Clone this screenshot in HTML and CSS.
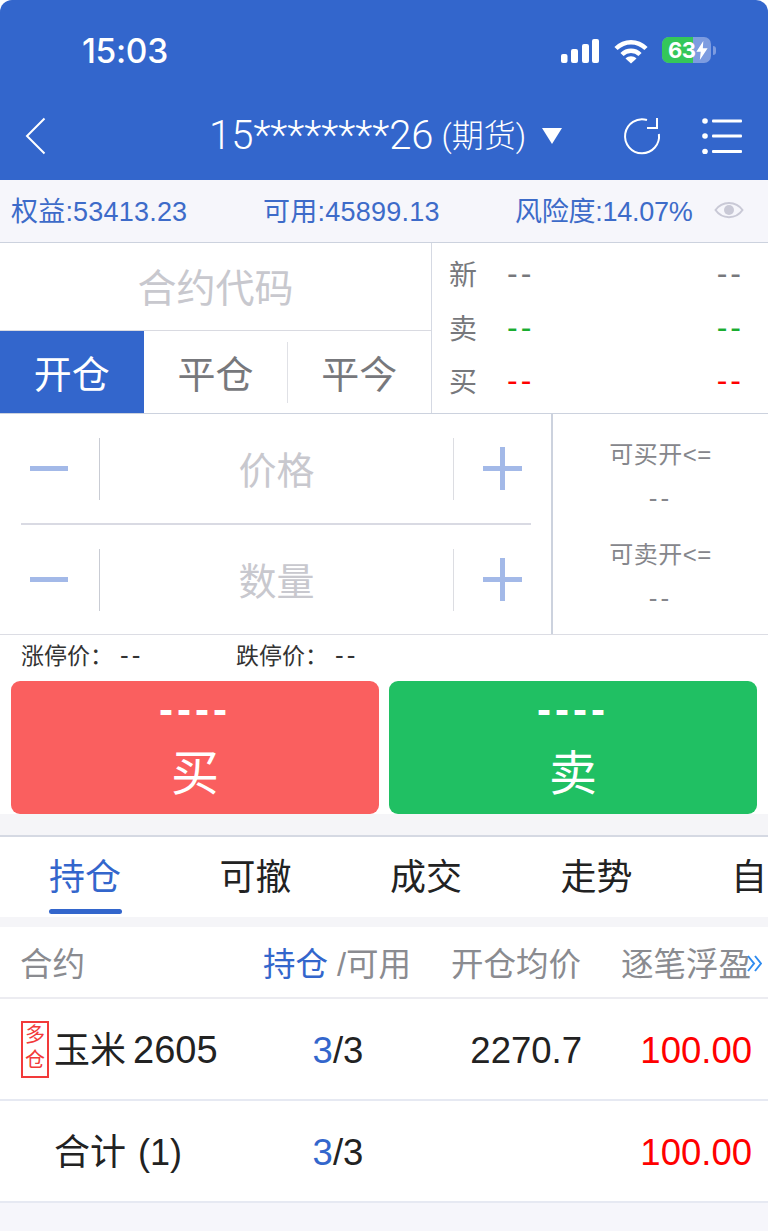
FILE: index.html
```html
<!DOCTYPE html>
<html lang="zh-CN">
<head>
  <meta charset="UTF-8" />
  <title>交易</title>
  <link rel="stylesheet" href="styles.css">
</head>
<body>

  <!-- Blue header: status bar + nav -->
  <header class="app-header">
    <div class="status-bar">
      <span class="clock">15:03</span>
      <div class="status-icons">
        <svg class="signal" width="38" height="24" viewBox="0 0 38 24" fill="#fff">
          <rect x="0" y="15" width="6.500" height="9" rx="2"/>
          <rect x="10" y="10" width="7" height="14" rx="2"/>
          <rect x="21" y="5" width="7" height="19" rx="2"/>
          <rect x="31" y="0" width="7" height="24" rx="2"/>
        </svg>
        <svg class="wifi" width="34" height="25" viewBox="0 0 34 25" fill="none" stroke="#fff" stroke-width="4.500">
          <path d="M2 9.500C10.500 1 23.500 1 32 9.500"/>
          <path d="M8 15.500C13 10.500 21 10.500 26 15.500"/>
          <path d="M17 24.500L11.500 19.500C14.500 16.500 19.500 16.500 22.500 19.500Z" fill="#fff" stroke="none"/>
        </svg>
        <div class="battery">
          <div class="battery-fill"></div>
          <span class="battery-num">63</span>
          <svg class="battery-bolt" width="12" height="19" viewBox="0 0 13 22" fill="#fff">
            <path d="M8 0L0 12.500H5L4 22L13 8.500H7.500Z"/>
          </svg>
        </div>
        <span class="battery-nub"></span>
      </div>
    </div>
    <nav class="nav-bar">
      <svg class="nav-back" width="22" height="38" viewBox="0 0 22 38" fill="none" stroke="#fff" stroke-width="2">
        <path d="M19.500 1.500L2 19L19.500 36.500"/>
      </svg>
      <div class="nav-title">
        <span>15********26</span>
        <span class="nav-title-sub">(期货)</span>
        <svg width="20" height="16" viewBox="0 0 20 16" fill="#fff"><path d="M0 0H20L10 16Z"/></svg>
      </div>
      <svg class="nav-refresh" width="40" height="42" viewBox="0 0 40 42" fill="none" stroke="#fff" stroke-width="2">
        <path d="M26 5A17 17 0 1 0 37.900 19"/>
        <path d="M26 13H36V3"/>
      </svg>
      <svg class="nav-menu" width="42" height="36" viewBox="0 0 42 36" fill="#fff">
        <circle cx="3" cy="3" r="2.800"/>
        <circle cx="3" cy="18" r="2.800"/>
        <circle cx="3" cy="33.500" r="2.800"/>
        <rect x="10" y="1.500" width="30" height="3" rx="1"/>
        <rect x="10" y="16.500" width="30" height="3" rx="1"/>
        <rect x="10" y="32" width="30" height="3" rx="1"/>
      </svg>
    </nav>
  </header>

  <!-- Account summary -->
  <div class="account-bar">
    <span class="account-equity">权益:53413.23</span>
    <span class="account-free">可用:45899.13</span>
    <span class="account-risk">风险度:14.07%</span>
    <svg class="eye" width="30" height="20" viewBox="0 0 30 20">
      <path d="M1.500 10C8 0.500 22 0.500 28.500 10C22 19.500 8 19.500 1.500 10Z" fill="none" stroke="#c9c9d6" stroke-width="2"/>
      <circle cx="15" cy="10" r="5" fill="#c9c9d6"/>
    </svg>
  </div>

  <!-- Contract + quote -->
  <section class="order-top">
    <div class="order-left">
      <div class="contract-code">合约代码</div>
      <div class="offset-tabs">
        <div class="offset-tab active">开仓</div>
        <div class="offset-tab">平仓</div>
        <div class="offset-tab split">平今</div>
      </div>
    </div>
    <div class="quote">
      <div class="quote-row"><span class="quote-label">新</span><span class="dash">--</span><span class="dash">--</span></div>
      <div class="quote-row green"><span class="quote-label">卖</span><span class="dash">--</span><span class="dash">--</span></div>
      <div class="quote-row red"><span class="quote-label">买</span><span class="dash">--</span><span class="dash">--</span></div>
    </div>
  </section>

  <!-- Price + volume -->
  <section class="order-mid">
    <div class="steppers">
      <div class="stepper">
        <div class="step-btn"><span class="minus"></span></div>
        <div class="step-value">价格</div>
        <div class="step-btn"><span class="plus"></span></div>
      </div>
      <div class="stepper-line"></div>
      <div class="stepper">
        <div class="step-btn"><span class="minus"></span></div>
        <div class="step-value">数量</div>
        <div class="step-btn"><span class="plus"></span></div>
      </div>
    </div>
    <div class="limits">
      <div class="limit-group">
        <div>可买开&lt;=</div>
        <div class="limits-dash">--</div>
      </div>
      <div class="limit-group">
        <div>可卖开&lt;=</div>
        <div class="limits-dash">--</div>
      </div>
    </div>
  </section>

  <div class="price-limits">
    <span class="price-limit">涨停价：<span class="price-dash">--</span></span>
    <span class="price-limit">跌停价：<span class="price-dash">--</span></span>
  </div>

  <div class="trade-buttons">
    <div class="trade-btn buy"><span class="trade-price">----</span><span class="trade-name">买</span></div>
    <div class="trade-btn sell"><span class="trade-price">----</span><span class="trade-name">卖</span></div>
  </div>

  <!-- Lower tabs -->
  <div class="list-tabs">
    <span class="list-tab active">持仓</span>
    <span class="list-tab">可撤</span>
    <span class="list-tab">成交</span>
    <span class="list-tab">走势</span>
    <span class="list-tab last">自</span>
  </div>

  <!-- Positions table -->
  <div class="pos-table">
    <div class="pos-head">
      <span>合约</span>
      <span class="center"><span class="blue">持仓</span> /可用</span>
      <span class="right">开仓均价</span>
      <span class="right">逐笔浮盈</span>
      <svg class="more" width="15" height="17" viewBox="0 0 15 17" fill="none" stroke="#2f8cf0" stroke-width="2">
        <path d="M1 1L7 8.500L1 16"/>
        <path d="M8 1L14 8.500L8 16"/>
      </svg>
    </div>
    <div class="pos-row">
      <span class="pos-name"><span class="pos-tag">多<br>仓</span><span class="pos-text">玉米<span class="pos-code">2605</span></span></span>
      <span class="center"><span class="blue">3</span>/3</span>
      <span class="right">2270.7</span>
      <span class="right red-text">100.00</span>
    </div>
    <div class="pos-row">
      <span class="pos-name total"><span class="pos-text">合计 (1)</span></span>
      <span class="center"><span class="blue">3</span>/3</span>
      <span class="right"></span>
      <span class="right red-text">100.00</span>
    </div>
  </div>
  <div class="page-rest"></div>

</body>
</html>
```

FILE: styles.css
```css
* {
  box-sizing: border-box;
}

html, body {
  margin: 0;
  padding: 0;
}

body {
  width: 768px;
  min-height: 100vh;
  display: flex;
  flex-direction: column;
  overflow-x: hidden;
  background-color: #ffffff;
  color: #222222;
  font-family: "Liberation Sans", "Noto Sans CJK SC", sans-serif;
}

/* Header */
.app-header {
  height: 180px;
  background-color: #3366cc;
  color: white;
  border-radius: 12px 12px 0 0;
}

.status-bar {
  height: 100px;
  padding: 31px 0 0 82px;
  display: flex;
  align-items: flex-start;
  justify-content: space-between;
}

.clock {
  font-family: Inter, sans-serif;
  font-size: 33.500px;
  font-weight: 500;
  line-height: 41px;
  letter-spacing: -0.3px;
}

.status-icons {
  display: flex;
  align-items: flex-start;
  padding: 8px 52px 0 0;
}

.wifi {
  margin: 0 14px 0 15px;
}

.battery {
  position: relative;
  width: 49px;
  height: 26px;
  margin-top: -2px;
  border-radius: 7px;
  background-color: #7d9ce0;
  overflow: hidden;
}

.battery-fill {
  width: 31px;
  height: 100%;
  background-color: #34c759;
}

.battery-num {
  position: absolute;
  left: 6px;
  top: 0;
  font-family: Inter, sans-serif;
  font-size: 22px;
  font-weight: 700;
  line-height: 26px;
  letter-spacing: -0.5px;
}

.battery-bolt {
  position: absolute;
  right: 3px;
  top: 4px;
}

.battery-nub {
  width: 3px;
  height: 9px;
  margin: 7px 0 0 2px;
  border-radius: 0 3px 3px 0;
  background-color: #7d9ce0;
}

.nav-bar {
  height: 80px;
  display: flex;
  align-items: flex-start;
  padding: 17px 24px 0 25px;
}

.nav-title {
  flex: 1;
  margin-left: 162px;
  display: flex;
  align-items: center;
  gap: 8px;
  font-family: Roboto, "Noto Sans CJK SC", sans-serif;
  font-size: 40px;
  line-height: 38px;
  font-weight: 300;
  white-space: nowrap;
}

.nav-title-sub {
  font-size: 32px;
  margin-right: 8px;
}

.nav-refresh {
  margin-top: -2px;
}

.nav-menu {
  margin-left: 41px;
  margin-top: 1px;
}

/* Account bar */
.account-bar {
  height: 63px;
  padding: 0 24px 3px 11px;
  display: flex;
  align-items: center;
  background-color: #f6f6fb;
  border-bottom: 1px solid #ccd2de;
  color: #3d6bc9;
  font-size: 27px;
  white-space: nowrap;
}

.account-equity {
  width: 252px;
  letter-spacing: 0.2px;
}

.account-free {
  width: 252px;
  letter-spacing: 0.25px;
}

.account-risk {
  width: 199px;
  letter-spacing: -0.25px;
}

/* Contract and quote */
.order-top {
  height: 171px;
  display: flex;
  border-bottom: 1px solid #ccd2de;
}

.order-left {
  width: 432px;
  border-right: 1px solid #d5d9e3;
  display: flex;
  flex-direction: column;
}

.contract-code {
  height: 88px;
  padding-bottom: 4px;
  display: flex;
  align-items: center;
  justify-content: center;
  border-bottom: 1px solid #d9dae1;
  color: #c8c8ce;
  font-size: 39px;
}

.offset-tabs {
  flex: 1;
  display: flex;
}

.offset-tab {
  width: 144px;
  padding-bottom: 2px;
  display: flex;
  align-items: center;
  justify-content: center;
  color: #77787c;
  font-size: 38px;
}

.offset-tab.active {
  background-color: #3366cc;
  color: white;
}

.offset-tab.split {
  position: relative;
}

.offset-tab.split::before {
  content: "";
  position: absolute;
  left: 0;
  top: 11px;
  bottom: 10px;
  width: 1px;
  background-color: #e0e1e6;
}

.quote {
  flex: 1;
  display: flex;
  flex-direction: column;
  justify-content: center;
  padding: 0 24px 3px 17px;
  color: #77787c;
}

.quote-row {
  height: 53.500px;
  display: grid;
  grid-template-columns: 58px 1fr auto;
  align-items: center;
}

.quote-label {
  font-size: 28px;
  color: #77787c;
}

.dash {
  font-size: 32px;
  line-height: 38px;
  letter-spacing: 3px;
}

.green .dash {
  color: #1aad30;
}

.red .dash {
  color: #ff0000;
}

/* Price and volume */
.order-mid {
  height: 221px;
  display: flex;
  border-bottom: 1px solid #dcdde4;
}

.steppers {
  width: 553px;
  border-right: 2px solid #ccd2de;
  display: flex;
  flex-direction: column;
}

.stepper {
  flex: 1;
  display: grid;
  grid-template-columns: 100px 1fr 98px;
  align-items: center;
}

.stepper-line {
  height: 2px;
  margin: 0 20px 0 21px;
  background-color: #d9dae3;
}

.step-btn {
  height: 62px;
  display: flex;
  align-items: center;
  justify-content: center;
  border-right: 1px solid #c9ccd4;
}

.step-btn:last-child {
  border-right: none;
  border-left: 1px solid #dcdde2;
}

.minus {
  width: 38px;
  height: 5px;
  margin-right: 1px;
  background-color: #a3b9e8;
}

.plus {
  position: relative;
  width: 39px;
  height: 43px;
}

.plus::before, .plus::after {
  content: "";
  position: absolute;
  background-color: #a3b9e8;
}

.plus::before {
  left: 0;
  right: 0;
  top: 19px;
  height: 5px;
}

.plus::after {
  top: 0;
  bottom: 0;
  left: 17px;
  width: 5px;
}

.step-value {
  padding-bottom: 3px;
  text-align: center;
  color: #c8c8ce;
  font-size: 38px;
}

.limits {
  flex: 1;
  padding-top: 18px;
  text-align: center;
  color: #85868b;
  font-size: 24px;
  line-height: 45px;
  letter-spacing: 0.5px;
}

.limit-group {
  height: 100px;
}

.limits-dash {
  margin-top: -1px;
  font-size: 26px;
  letter-spacing: 3px;
}

/* Limit prices */
.price-limits {
  height: 46px;
  padding: 0 0 8px 21px;
  display: flex;
  align-items: center;
  font-size: 23px;
  color: #333333;
}

.price-limit {
  width: 215px;
}

.price-dash {
  margin-left: 7px;
  font-size: 26px;
  letter-spacing: 3px;
}

.trade-buttons {
  display: flex;
  gap: 10px;
  padding: 0 11px;
  border-bottom: 21px solid #f5f5f8;
}

.trade-btn {
  width: 368px;
  height: 133px;
  display: flex;
  flex-direction: column;
  align-items: center;
  border-radius: 9px;
  color: white;
}

.trade-btn.buy {
  background-color: #fa5f5f;
}

.trade-btn.sell {
  background-color: #20c063;
}

.trade-price {
  height: 57px;
  padding-top: 9px;
  font-size: 42px;
  font-weight: 700;
  line-height: 40px;
  letter-spacing: 4px;
}

.trade-name {
  font-size: 48px;
  line-height: 72px;
}

/* List tabs */
.list-tabs {
  height: 92px;
  display: flex;
  gap: 28.500px;
  padding: 0 0 0 49px;
  border-top: 2px solid #d5d9e3;
  border-bottom: 10px solid #f5f5f8;
  font-size: 36px;
  overflow: hidden;
  white-space: nowrap;
}

.list-tab {
  flex: none;
  width: 142px;
  line-height: 81px;
}

.list-tab.last {
  width: 36px;
}

.list-tab.active {
  color: #3366cc;
  position: relative;
}

.list-tab.active::after {
  content: "";
  position: absolute;
  left: 0;
  top: 72px;
  width: 73px;
  height: 5px;
  border-radius: 3px;
  background-color: #3366cc;
}

/* Positions */
.pos-head, .pos-row {
  display: grid;
  grid-template-columns: 223px 188px 150px 170px;
  padding: 0 17px 0 20px;
  align-items: center;
  white-space: nowrap;
}

.pos-head {
  position: relative;
  height: 72px;
  padding-bottom: 2px;
  border-bottom: 2px solid #ececf1;
  color: #8a8b90;
  font-size: 32.500px;
}

.pos-row {
  height: 102px;
  padding: 3px 17px 0 21px;
  border-bottom: 2px solid #e6e9f2;
  font-size: 36.500px;
  line-height: 44px;
}

.center {
  text-align: center;
}

.right {
  text-align: right;
}

.blue {
  color: #3366cc;
}

.red-text {
  color: #ff0000;
}

.pos-name {
  display: flex;
  align-items: center;
  font-size: 36px;
}

.pos-code {
  margin-left: 7px;
  font-size: 38px;
}

.pos-name.total {
  padding-left: 33px;
  word-spacing: 2px;
}

.pos-tag {
  width: 28px;
  height: 57px;
  margin: -3px 5px 0 0;
  border: 2px solid #f23a3a;
  color: #f23a3a;
  font-size: 20px;
  line-height: 25px;
  text-align: center;
}

.more {
  position: absolute;
  right: 6px;
  top: 28px;
}

.page-rest {
  flex: 1;
  background-color: #f6f6fb;
}
```
